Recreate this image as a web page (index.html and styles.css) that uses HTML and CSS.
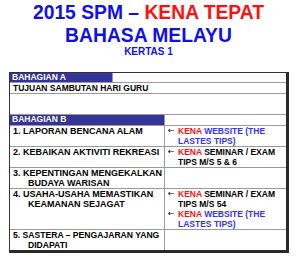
FILE: index.html
```html
<!DOCTYPE html>
<html>
<head>
<meta charset="utf-8">
<link rel="stylesheet" href="styles.css">
</head>
<body>
<div class="page">
  <div class="title">
    <div class="t1"><span class="blue">2015 SPM – </span><span class="red">KENA TEPAT</span></div>
    <div class="t2 blue">BAHASA MELAYU</div>
    <div class="t3 blue">KERTAS 1</div>
  </div>
  <div class="sheet">
    <div class="row row-a">
      <div class="band band-a">BAHAGIAN A</div>
      <div class="blank"></div>
    </div>
    <div class="row full"><div class="cell">TUJUAN SAMBUTAN HARI GURU</div></div>
    <div class="row full empty"><div class="cell"></div></div>
    <div class="row split">
      <div class="band">BAHAGIAN B</div>
      <div class="cell right"></div>
    </div>
    <div class="row split">
      <div class="cell left">1. LAPORAN BENCANA ALAM</div>
      <div class="cell right">
        <div class="item"><span class="arr">←</span><div class="txt"><span class="red">KENA</span> <span class="lblue">WEBSITE (THE</span><br><span class="lblue">LASTES TIPS)</span></div></div>
      </div>
    </div>
    <div class="row split">
      <div class="cell left">2. KEBAIKAN AKTIVITI REKREASI</div>
      <div class="cell right">
        <div class="item"><span class="arr">←</span><div class="txt"><span class="red">KENA</span> <span>SEMINAR / EXAM</span><br><span>TIPS M/S 5 &amp; 6</span></div></div>
      </div>
    </div>
    <div class="row split">
      <div class="cell left">3. KEPENTINGAN MENGEKALKAN<br>BUDAYA WARISAN</div>
      <div class="cell right"></div>
    </div>
    <div class="row split">
      <div class="cell left">4. USAHA-USAHA MEMASTIKAN<br>KEAMANAN SEJAGAT</div>
      <div class="cell right">
        <div class="item"><span class="arr">←</span><div class="txt"><span class="red">KENA</span> <span>SEMINAR / EXAM</span><br><span>TIPS M/S 54</span></div></div>
        <div class="item"><span class="arr">←</span><div class="txt"><span class="red">KENA</span> <span class="lblue">WEBSITE (THE</span><br><span class="lblue">LASTES TIPS)</span></div></div>
      </div>
    </div>
    <div class="row split">
      <div class="cell left tight">5. SASTERA – PENGAJARAN YANG<br>DIDAPATI</div>
      <div class="cell right"></div>
    </div>
  </div>
</div>
</body>
</html>
```

FILE: styles.css
```css
html, body {
  margin: 0;
  padding: 0;
  background: #ffffff;
}
body {
  width: 300px;
  height: 256px;
  overflow: hidden;
  font-family: "Liberation Sans", Arial, sans-serif;
  font-weight: bold;
}
.page {
  padding-top: 2px;
}
.title {
  width: 297px;
  text-align: center;
}
.t1, .t2 {
  font-size: 19.3px;
  line-height: 22.5px;
}
.t3 {
  font-size: 10px;
  line-height: 10px;
}
.blue { color: #1010ee; }
.red { color: #ff1010; }
.lblue { color: #3333ff; }

.sheet {
  margin: 15px 0 0 9px;
  width: 276px;
  border-top: 1px solid #333333;
  border-left: 1px solid #333333;
  border-right: 3px solid #2a2a2a;
  border-bottom: 3px solid #2a2a2a;
  font-size: 8.5px;
  line-height: 10px;
  color: #000000;
}
.row {
  border-top: 1px solid #9a9a9a;
}
.row:first-child {
  border-top: none;
}
.row-a {
  display: flex;
  height: 9px;
}
.band {
  background: #333399;
  color: #ffffff;
  padding-left: 2px;
  line-height: 9px;
}
.band-a {
  width: 100px;
  border-right: 1px solid #9a9a9a;
}
.blank {
  flex: 1;
}
.cell {
  padding-left: 3px;
  min-height: 10px;
}
.empty .cell {
  height: 20px;
}
.split {
  display: grid;
  grid-template-columns: 155px 1fr;
}
.split .left {
  border-right: 1px solid #9a9a9a;
  font-size: 9px;
  white-space: nowrap;
  overflow: hidden;
  padding-left: 18px;
  text-indent: -15px;
}
.split .left.tight {
  font-size: 8.6px;
}
.split .band {
  border-right: 1px solid #9a9a9a;
}
.split .right {
  padding-left: 3px;
  padding-right: 2px;
}
.item {
  display: flex;
}
.txt {
  flex: 1;
  white-space: nowrap;
}
.arr {
  flex: none;
  width: 10px;
  font-family: "DejaVu Sans", sans-serif;
  font-weight: normal;
  font-size: 8px;
}
```
